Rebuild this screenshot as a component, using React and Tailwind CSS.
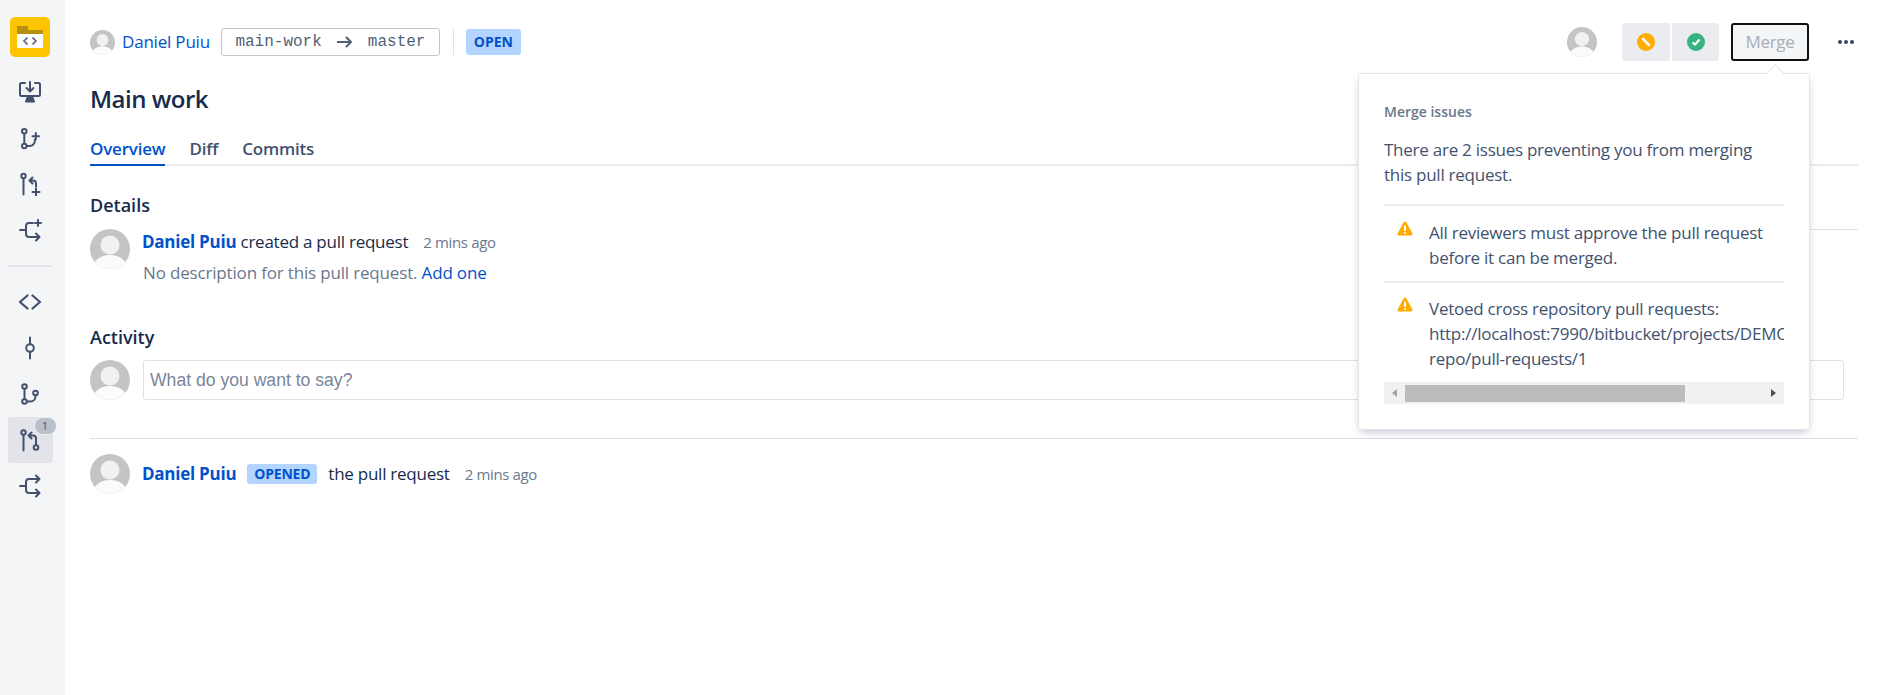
import React from "react";

const ICON = "#42526e";

const Avatar = ({ size }) => (
  <svg width={size} height={size} viewBox="0 0 40 40" className="shrink-0">
    <defs>
      <clipPath id="avatarClip">
        <circle cx="20" cy="20" r="20" />
      </clipPath>
    </defs>
    <g clipPath="url(#avatarClip)">
      <rect width="40" height="40" fill="#c4c4c4" />
      <circle cx="20" cy="16" r="9.500" fill="#f1f1f1" />
      <path d="M2 40c1-8 8-14 18-14s17 6 18 14z" fill="#fbfbfb" />
    </g>
  </svg>
);

const Svg = ({ children }) => (
  <svg width="24" height="24" viewBox="0 0 24 24" fill="none" stroke={ICON} strokeWidth="2" strokeLinecap="round" strokeLinejoin="round">
    {children}
  </svg>
);

const CloneIcon = () => (
  <Svg>
    <path d="M7 3H3.500A1.500 1.500 0 0 0 2 4.500v10A1.500 1.500 0 0 0 3.500 16h17a1.500 1.500 0 0 0 1.500-1.500v-10A1.500 1.500 0 0 0 20.500 3H17" />
    <path d="M12 2v9M8.500 8l3.500 3.500L15.500 8" />
    <path d="M8 21.500l1.500-4h5l1.500 4z" fill={ICON} />
  </Svg>
);

const BranchPlusIcon = () => (
  <Svg>
    <circle cx="6.300" cy="5.300" r="2.300" />
    <circle cx="6.300" cy="20" r="2.300" />
    <path d="M6.300 7.800v9.800M8.800 20h3a5 5 0 0 0 5-5v-1.500M14.500 10.300h6.500M17.800 7v6.500" />
  </Svg>
);

const PullPlusIcon = () => (
  <Svg>
    <circle cx="5.500" cy="4" r="2.200" />
    <path d="M5.500 6.500v16M14.500 5.500l-3 3 3 3M12 8.500h3a3 3 0 0 1 3 3v3M14.500 20h7M18 16.500v7" />
  </Svg>
);

const ForkPlusIcon = () => (
  <Svg>
    <path d="M2 12h6M8 12V8a3 3 0 0 1 3-3h4M8 12v4a3 3 0 0 0 3 3h9M18 15.500l3.500 3.500-3.500 3.500M17 5h6M20 2v6" />
  </Svg>
);

const CodeIcon = () => (
  <Svg>
    <path d="M9.500 5.500L2 12l7.500 6.500M14.500 5.500L22 12l-7.500 6.500" strokeWidth="2.300" />
  </Svg>
);

const CommitIcon = () => (
  <Svg>
    <circle cx="12" cy="12" r="3.800" />
    <path d="M12 1.500v6.500M12 16v6.500" />
  </Svg>
);

const BranchIcon = () => (
  <Svg>
    <circle cx="6.500" cy="4.500" r="2.300" />
    <circle cx="6.500" cy="19.500" r="2.300" />
    <circle cx="17.500" cy="11" r="2.300" />
    <path d="M6.500 7v10M9 19.500h3.500a5 5 0 0 0 5-5v-1" />
  </Svg>
);

const PullIcon = () => (
  <Svg>
    <circle cx="5.500" cy="4.500" r="2.200" />
    <circle cx="18" cy="19.500" r="2.300" />
    <path d="M5.500 7v15.500M13.500 4.500l-3 3 3 3M11 7.500h4a3 3 0 0 1 3 3V17" />
  </Svg>
);

const ForkIcon = () => (
  <Svg>
    <path d="M2 12h6M8 12V8a3 3 0 0 1 3-3h9M8 12v4a3 3 0 0 0 3 3h9M18 1.500L21.500 5 18 8.500M18 15.500l3.500 3.500-3.500 3.500" />
  </Svg>
);

const NavItem = ({ children, className = "" }) => (
  <div className={`relative flex items-center justify-center w-[45px] h-[46px] rounded-[3px] ${className}`}>{children}</div>
);

const Warn = () => (
  <svg width="18" height="18" viewBox="0 0 18 18" className="shrink-0">
    <path d="M7.700 2.200a1.500 1.500 0 0 1 2.600 0l6 11a1.500 1.500 0 0 1-1.300 2.300H3a1.500 1.500 0 0 1-1.300-2.300z" fill="#ffab00" />
    <rect x="8" y="5.500" width="2" height="5.500" rx="1" fill="#fff" />
    <circle cx="9" cy="13" r="1.100" fill="#fff" />
  </svg>
);

const ui = "font-['Open_Sans','Noto_Sans',sans-serif]";

const Popover = () => (
  <div className="absolute left-[1358px] top-[73px] w-[452px] h-[357px] bg-white rounded-[3px] border border-[#e4e6ec] shadow-[0_4px_8px_-2px_rgba(9,30,66,0.25)] pl-[25px] pr-[25px] pt-[29px] text-[#42526e]">
    <div className="absolute left-[410px] top-[-7px] w-[13px] h-[13px] rotate-45 bg-white border-l border-t border-[#e4e6ec]"></div>
    <div className="text-[14px] leading-[18px] font-semibold text-[#6b778c]">Merge issues</div>
    <div className="mt-[16px] text-[17px] leading-[25px] tracking-[-0.25px] pb-[17px] border-b-2 border-[#ebecf0]">
      There are 2 issues preventing you from merging
      <br />
      this pull request.
    </div>
    <div className="flex gap-[15px] pl-[12px] pt-[14px] pb-[11px] text-[17px] leading-[25px] tracking-[-0.25px] border-b-2 border-[#ebecf0]">
      <Warn />
      <div>
        All reviewers must approve the pull request
        <br />
        before it can be merged.
      </div>
    </div>
    <div className="flex gap-[15px] pl-[12px] pt-[13px] text-[17px] leading-[25px] tracking-[-0.25px] overflow-hidden h-[99px]">
      <Warn />
      <div className="whitespace-nowrap">
        Vetoed cross repository pull requests:
        <br />
        http://localhost:7990/bitbucket/projects/DEMO/
        <br />
        repo/pull-requests/1
      </div>
    </div>
    <div className="flex items-center h-[22px] bg-[#f1f1f1]">
      <div className="w-[21px] flex justify-center">
        <div className="w-0 h-0 border-y-[4px] border-y-transparent border-r-[5px] border-r-[#a3a3a3]"></div>
      </div>
      <div className="w-[280px] h-[17px] bg-[#bcbcbc]"></div>
      <div className="flex-1"></div>
      <div className="w-[21px] flex justify-center">
        <div className="w-0 h-0 border-y-[4px] border-y-transparent border-l-[5px] border-l-[#505050]"></div>
      </div>
    </div>
  </div>
);

export default function App() {
  return (
    <div className={`relative flex min-h-[695px] bg-white text-[#172b4d] ${ui}`}>
      <aside className="w-[65px] shrink-0 bg-[#f4f5f7] flex flex-col items-center pt-[17px] pr-[5px]">
        <div className="w-[40px] h-[40px] rounded-[5px] bg-[#ffc400] flex items-center justify-center mb-[12px]">
          <svg width="26" height="22" viewBox="0 0 26 22">
            <rect y="0" width="11" height="5" fill="#b8900f" />
            <rect y="4" width="26" height="4" fill="#b8900f" />
            <rect y="8" width="26" height="14" fill="#fff" />
            <path d="M10.500 11.500L7 15l3.500 3.500M15.500 11.500L19 15l-3.500 3.500" fill="none" stroke="#6b778c" strokeWidth="1.800" />
          </svg>
        </div>
        <NavItem><CloneIcon /></NavItem>
        <NavItem><BranchPlusIcon /></NavItem>
        <NavItem><PullPlusIcon /></NavItem>
        <NavItem><ForkPlusIcon /></NavItem>
        <div className="w-[45px] h-[2px] bg-[#e4e6ea] mt-[12px] mb-[12px]"></div>
        <NavItem><CodeIcon /></NavItem>
        <NavItem><CommitIcon /></NavItem>
        <NavItem><BranchIcon /></NavItem>
        <NavItem className="bg-[#e2e4e9]">
          <PullIcon />
          <span className="absolute left-[27px] top-[1px] w-[21px] h-[16px] rounded-full bg-[#b8c0cc] ring-1 ring-[#eceef1] text-[11px] leading-[16px] text-center text-[#42526e]">1</span>
        </NavItem>
        <NavItem><ForkIcon /></NavItem>
      </aside>

      <main className="flex-1 pl-[25px] pr-[31px] pt-[23px]">
        <header className="flex items-center h-[38px]">
          <Avatar size={25} />
          <span className="ml-[7px] text-[#0052cc] text-[17px] tracking-[-0.2px]">Daniel Puiu</span>
          <div className="ml-[11px] h-[28px] w-[219px] border border-[#c1c7d0] rounded-[3px] flex items-center justify-center gap-[15px] font-['Liberation_Mono',monospace] text-[16px] text-[#505f79]">
            <span>main-work</span>
            <svg width="16" height="12" viewBox="0 0 16 12" fill="none" stroke="#505f79" strokeWidth="2">
              <path d="M0 6h14M9 1l5 5-5 5" />
            </svg>
            <span>master</span>
          </div>
          <div className="ml-[13px] w-[1px] h-[26px] bg-[#dfe1e6]"></div>
          <span className="ml-[12px] h-[26px] w-[55px] rounded-[3px] bg-[#b3d4ff] text-[#0052cc] text-[14px] font-bold leading-[26px] text-center">OPEN</span>
          <div className="flex-1"></div>
          <Avatar size={30} />
          <div className="ml-[25px] flex gap-[2px]">
            <div className="w-[48px] h-[38px] bg-[#ebecf0] rounded-l-[3px] flex items-center justify-center">
              <svg width="18" height="18" viewBox="0 0 18 18">
                <circle cx="9" cy="9" r="9" fill="#ffab00" />
                <path d="M6 6l6 6" stroke="#fff" strokeWidth="2.500" strokeLinecap="round" />
              </svg>
            </div>
            <div className="w-[47px] h-[38px] bg-[#ebecf0] rounded-r-[3px] flex items-center justify-center">
              <svg width="18" height="18" viewBox="0 0 18 18">
                <circle cx="9" cy="9" r="9" fill="#36b37e" />
                <path d="M5.500 9.500l2.500 2 4.500-5" fill="none" stroke="#fff" strokeWidth="2.200" />
              </svg>
            </div>
          </div>
          <div className="ml-[12px] w-[78px] h-[38px] border-2 border-[#111] rounded-[3px] bg-[#f4f5f7] text-[#a5adba] text-[17px] leading-[34px] text-center tracking-[-0.3px]">Merge</div>
          <div className="ml-[29px] flex gap-[2px] mr-[4px]">
            <span className="w-[4px] h-[4px] rounded-full bg-[#344563]"></span>
            <span className="w-[4px] h-[4px] rounded-full bg-[#344563]"></span>
            <span className="w-[4px] h-[4px] rounded-full bg-[#344563]"></span>
          </div>
        </header>

        <h1 className="mt-[22px] text-[24px] leading-[32px] font-semibold tracking-[-0.5px]">Main work</h1>

        <nav className="mt-[15px] flex gap-[24px] h-[36px] border-b-2 border-[#ebecf0] text-[17px] font-semibold text-[#42526e] tracking-[-0.2px] leading-[38px]">
          <span className="text-[#0052cc] border-b-2 border-[#0052cc] h-[36px]">Overview</span>
          <span>Diff</span>
          <span>Commits</span>
        </nav>

        <div className="flex">
          <div className="flex-1">
            <h2 className="mt-[27px] text-[18px] leading-[24px] font-semibold">Details</h2>
            <div className="mt-[12px] flex gap-[12px]">
              <Avatar size={40} />
              <div className="-mt-[2px] text-[17px] leading-[30px] tracking-[-0.25px]">
                <div>
                  <span className="font-bold text-[#0052cc]">Daniel Puiu</span> created a pull request
                  <span className="ml-[15px] text-[15px] text-[#6b778c] tracking-[-0.35px]">2 mins ago</span>
                </div>
                <div className="mt-[1px] ml-[1px] text-[#6b778c] tracking-[-0.17px]">
                  No description for this pull request. <span className="text-[#0052cc]">Add one</span>
                </div>
              </div>
            </div>
          </div>
          <div className="w-[450px] h-0 mt-[63px] border-t border-[#dfe1e6]"></div>
        </div>

        <h2 className="mt-[37px] text-[18px] leading-[24px] font-semibold">Activity</h2>
        <div className="mt-[11px] flex gap-[13px]">
          <Avatar size={40} />
          <div className="flex-1 mr-[14px] h-[40px] border border-[#dfe1e6] rounded-[3px] pl-[6px] font-['Liberation_Sans',sans-serif] text-[17.600px] leading-[38px] text-[#7a869a]">What do you want to say?</div>
        </div>

        <div className="mt-[38px] border-t border-[#dfe1e6] pt-[15px] flex items-center text-[17px] tracking-[-0.25px]">
          <Avatar size={40} />
          <span className="ml-[12px] font-bold text-[#0052cc]">Daniel Puiu</span>
          <span className="ml-[11px] h-[20px] w-[70px] text-center rounded-[3px] bg-[#b3d4ff] text-[#0052cc] text-[14px] font-bold leading-[20px] tracking-[-0.2px]">OPENED</span>
          <span className="ml-[11px]">the pull request</span>
          <span className="ml-[15px] text-[15px] text-[#6b778c] tracking-[-0.35px]">2 mins ago</span>
        </div>
      </main>

      <Popover />
    </div>
  );
}
